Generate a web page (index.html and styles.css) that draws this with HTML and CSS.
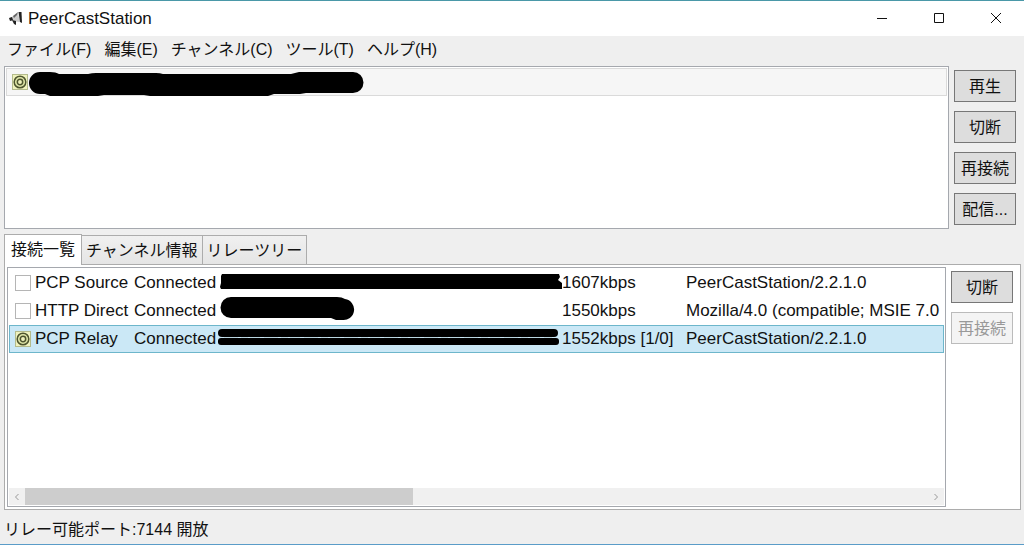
FILE: index.html
```
<!DOCTYPE html>
<html lang="ja">
  <head>
    <meta charset="UTF-8" />
    <meta name="viewport" content="width=device-width, initial-scale=1.0" />
    <title>PeerCastStation</title>
    <link rel="stylesheet" href="styles.css">
  </head>
  <body>
    <svg class="symbols" aria-hidden="true">
      <symbol id="relay" viewBox="0 0 16 16">
        <rect x="0.5" y="0.5" width="15" height="15" fill="#eff2bd" stroke="#b4bb8c" />
        <circle cx="8" cy="8" r="5.8" fill="#dfe6a8" stroke="#4e552f" stroke-width="1.5" />
        <circle cx="8" cy="8" r="2.7" fill="#eff2bd" stroke="#4e552f" stroke-width="1.5" />
      </symbol>
    </svg>
    <header class="titlebar">
      <svg class="app-icon" viewBox="0 0 16 16" aria-hidden="true">
        <path d="M2 7L10 2L12 11L3 10Z" fill="#ccc" />
        <path d="M1 7L4 6L5 9L2 10Z" fill="#222" />
        <path d="M5 5L10 1L9 4L6 7Z" fill="#666" />
        <path d="M10.500 1L13.500 1L14 12L12 11Z" fill="#222" />
        <path d="M4 9L8 10L8 14L6 13Z" fill="#222" />
      </svg>
      <h1>PeerCastStation</h1>
      <div class="window-buttons">
        <button type="button" aria-label="最小化"><svg viewBox="0 0 12 12"><path d="M1 5.5H11" /></svg></button>
        <button type="button" aria-label="最大化"><svg viewBox="0 0 12 12"><path d="M1.5 0.5H10.5V9.5H1.5Z" /></svg></button>
        <button type="button" aria-label="閉じる"><svg viewBox="0 0 12 12"><path d="M1 0L11 10M11 0L1 10" /></svg></button>
      </div>
    </header>
    <nav class="menubar">
      <button type="button">ファイル(F)</button>
      <button type="button">編集(E)</button>
      <button type="button">チャンネル(C)</button>
      <button type="button">ツール(T)</button>
      <button type="button">ヘルプ(H)</button>
    </nav>
    <main>
      <section class="channels">
        <div class="channel-list">
          <div class="channel">
            <svg class="status-icon"><use href="#relay" /></svg>
            <svg class="mask" width="336" height="26" viewBox="0 0 336 26">
              <path d="M12 0H22Q28 0 31 2H60Q64 1 68 1H128Q132 1 135 2H229L234 2H263L271 0H325A10.500 10.500 0 0 1 325 21H278L272 22H246L240 24H122L116 23H76L70 24H22L17 22H12A11 11 0 0 1 12 0Z" />
            </svg>
          </div>
        </div>
        <div class="actions">
          <button type="button">再生</button>
          <button type="button">切断</button>
          <button type="button">再接続</button>
          <button type="button">配信...</button>
        </div>
      </section>
      <section class="details">
        <div class="tabs" role="tablist">
          <button type="button" role="tab" aria-selected="true">接続一覧</button>
          <button type="button" role="tab" aria-selected="false">チャンネル情報</button>
          <button type="button" role="tab" aria-selected="false">リレーツリー</button>
        </div>
        <div class="panel" role="tabpanel">
          <div class="connection-list">
            <div class="rows">
              <table>
                <colgroup>
                  <col class="col-icon"><col class="col-name"><col class="col-state"><col class="col-address"><col class="col-rate"><col>
                </colgroup>
                <tbody>
                  <tr>
                    <td><span class="empty-icon"></span></td>
                    <td>PCP Source</td>
                    <td>Connected</td>
                    <td><svg class="mask" width="344" height="24" viewBox="0 0 344 24"><path d="M4 3H341L342 6L340 9L344 12V18H3L2 16L3 12V5Z" /></svg></td>
                    <td>1607kbps</td>
                    <td>PeerCastStation/2.2.1.0</td>
                  </tr>
                  <tr>
                    <td><span class="empty-icon"></span></td>
                    <td>HTTP Direct</td>
                    <td>Connected</td>
                    <td><svg class="mask" width="344" height="26" viewBox="0 0 344 26"><path d="M13 -1H119Q124 -1 127 1A10.500 10.500 0 0 1 124 22H118L113 20H13A10.500 10.500 0 0 1 13 -1Z" /></svg></td>
                    <td>1550kbps</td>
                    <td>Mozilla/4.0 (compatible; MSIE 7.0</td>
                  </tr>
                  <tr class="selected">
                    <td><svg class="status-icon"><use href="#relay" /></svg></td>
                    <td>PCP Relay</td>
                    <td>Connected</td>
                    <td>
                      <svg class="mask" width="344" height="24" viewBox="0 0 344 24">
                        <rect y="2" width="340" height="8" rx="4" />
                        <rect y="11" width="341" height="7" rx="3" />
                        <path class="dashes" d="M6 10.500H334" />
                      </svg>
                    </td>
                    <td>1552kbps [1/0]</td>
                    <td>PeerCastStation/2.2.1.0</td>
                  </tr>
                </tbody>
              </table>
            </div>
            <div class="scrollbar">
              <button type="button" aria-label="左へ"><svg viewBox="0 0 8 8"><path d="M5.500 1L2.500 4L5.500 7" /></svg></button>
              <div class="track"><div class="thumb"></div></div>
              <button type="button" aria-label="右へ"><svg viewBox="0 0 8 8"><path d="M2.500 1L5.500 4L2.500 7" /></svg></button>
            </div>
          </div>
          <div class="actions">
            <button type="button">切断</button>
            <button type="button" disabled>再接続</button>
          </div>
        </div>
      </section>
    </main>
    <footer>リレー可能ポート:7144 開放</footer>
  </body>
</html>
```
FILE: styles.css
```
* {
  box-sizing: border-box;
}

body {
  display: flex;
  flex-direction: column;
  min-height: 100vh;
  margin: 0;
  border-top: 1px solid #4a98a8;
  border-bottom: 1px solid #5a9cc8;
  color: #111;
  background-color: #efefef;
  font-family: "Liberation Sans", "Noto Sans CJK JP", sans-serif;
  font-size: 16px;
  line-height: 24px;
}

button {
  padding: 0;
  border: none;
  color: inherit;
  background: none;
  font: inherit;
  white-space: nowrap;
}

.symbols {
  display: none;
}

.titlebar {
  display: flex;
  align-items: center;
  height: 35px;
  padding-left: 8px;
  background-color: #fff;
}

.app-icon {
  width: 16px;
  height: 16px;
  margin-right: 4px;
}

.titlebar h1 {
  margin: 0;
  font-size: 17px;
  font-weight: normal;
}

.window-buttons {
  display: flex;
  margin-left: auto;
}

.window-buttons button {
  display: flex;
  align-items: center;
  justify-content: center;
  width: 57px;
  height: 34px;
}

.window-buttons svg {
  width: 12px;
  height: 12px;
  overflow: visible;
  fill: none;
  stroke: #111;
}

.menubar {
  display: flex;
  align-items: flex-start;
  gap: 13px;
  height: 30px;
  padding: 2px 7px 0;
}

main {
  display: flex;
  flex: 1;
  flex-direction: column;
  padding: 0 3px 0 4px;
}

.channels {
  display: flex;
}

.channel-list {
  flex: 1;
  height: 163px;
  padding: 1px;
  border: 1px solid #a5a8ae;
  background-color: #fff;
}

.channel {
  display: flex;
  height: 28px;
  padding: 3px 5px;
  border: 1px solid #dadada;
  background-color: #f6f6f6;
}

.status-icon {
  display: block;
  width: 16px;
  height: 16px;
}

.channel .status-icon {
  margin-top: 2px;
}

.mask {
  display: block;
  overflow: visible;
}

.dashes {
  stroke: #b9d5df;
  stroke-dasharray: 14 3 7 2 10 4;
}

.actions {
  display: flex;
  flex-direction: column;
  gap: 9px;
  padding: 4px 5px;
}

.actions button {
  width: 62px;
  height: 32px;
  padding-top: 2px;
  border: 1px solid #777;
  background-color: #ddd;
}

.actions button:disabled {
  border-color: #bbb;
  color: #999;
  background-color: #f4f4f4;
}

.details {
  display: flex;
  flex: 1;
  flex-direction: column;
  margin-top: 5px;
}

.tabs {
  display: flex;
  align-items: flex-end;
}

.tabs button {
  height: 29px;
  padding: 2px 4px 0;
  border: 1px solid #acacac;
  border-bottom: none;
  border-left: none;
  background: linear-gradient(#f0f0f0, #e5e5e5);
}

.tabs button[aria-selected="true"] {
  z-index: 1;
  height: 31px;
  margin-bottom: -1px;
  padding: 0 6px;
  border-left: 1px solid #acacac;
  background: #fff;
}

.panel {
  display: flex;
  flex: 1;
  padding: 2px;
  border: 1px solid #acacac;
  background-color: #fff;
}

.connection-list {
  display: flex;
  flex: 1;
  flex-direction: column;
  min-width: 0;
  padding: 1px;
  border: 1px solid #a5a8ae;
}

.rows {
  flex: 1;
  overflow: hidden;
}

table {
  width: 100%;
  border-collapse: collapse;
  table-layout: fixed;
  font-size: 17px;
}

td {
  height: 28px;
  padding: 0;
  white-space: nowrap;
}

td:first-child {
  padding-left: 6px;
}

.col-icon {
  width: 26px;
}

.col-name {
  width: 99px;
}

.col-state {
  width: 84px;
}

.col-address {
  width: 344px;
}

.col-rate {
  width: 124px;
}

.empty-icon {
  display: block;
  width: 16px;
  height: 16px;
  border: 1px solid #b5b5b5;
  background-color: #fff;
}

.selected {
  background-color: #cbe8f6;
  box-shadow: inset 0 0 0 1px #6db6cb;
}

.scrollbar {
  display: flex;
  height: 17px;
  background-color: #f0f0f0;
}

.scrollbar button {
  display: flex;
  align-items: center;
  justify-content: center;
  width: 16px;
}

.scrollbar svg {
  width: 8px;
  height: 8px;
  fill: none;
  stroke: #999;
}

.track {
  flex: 1;
}

.thumb {
  width: 43%;
  height: 17px;
  background-color: #cdcdcd;
}

footer {
  padding: 8px 4px 2px;
}
```
